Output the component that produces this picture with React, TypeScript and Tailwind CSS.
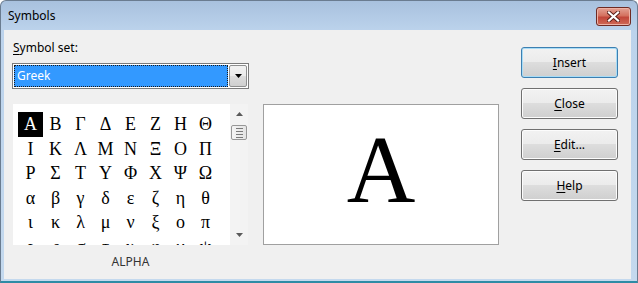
import React from "react"

const ROWS = [
  ["Α", "Β", "Γ", "Δ", "Ε", "Ζ", "Η", "Θ"],
  ["Ι", "Κ", "Λ", "Μ", "Ν", "Ξ", "Ο", "Π"],
  ["Ρ", "Σ", "Τ", "Υ", "Φ", "Χ", "Ψ", "Ω"],
  ["α", "β", "γ", "δ", "ε", "ζ", "η", "θ"],
  ["ι", "κ", "λ", "μ", "ν", "ξ", "ο", "π"],
  ["ρ", "ς", "σ", "τ", "υ", "φ", "χ", "ψ"],
]

const BUTTONS = [
  { key: "I", rest: "nsert", primary: true },
  { key: "C", rest: "lose" },
  { key: "E", rest: "dit..." },
  { key: "H", rest: "elp" },
]

const DialogButton = ({ k, rest, primary }: { k: string; rest: string; primary?: boolean }) => (
  <div
    className={
      "w-[97px] h-[31px] rounded-[3px] border flex items-center justify-center text-[12px] text-black " +
      "bg-[linear-gradient(#f2f2f2,#ebebeb_50%,#dddddd_50%,#cfcfcf)] " +
      (primary ? "border-[#3c7fb1] shadow-[inset_0_0_0_1px_#a8dcf6]" : "border-[#707070] shadow-[inset_0_0_0_1px_#fcfcfc]")
    }
  >
    <span>
      <span className="underline underline-offset-2">{k}</span>
      {rest}
    </span>
  </div>
)

export default function App() {
  return (
    <div className="w-[638px] h-[283px] flex flex-col rounded-t-[6px] border-x border-t border-[#6a7c90] border-b-2 border-b-[#2e8ba5] bg-[linear-gradient(#a8c1de,#bcd3ec_30px,#c4d9ee)] font-['Noto_Sans',sans-serif] overflow-hidden">
      {/* TITLE BAR */}
      <div className="h-[29px] flex items-center justify-between pl-[7px] pr-[6px]">
        <span className="text-[12px] text-black">Symbols</span>
        <div className="mt-[2px] w-[35px] h-[19px] rounded-[3px] border border-[#6e2b24] bg-[linear-gradient(#e3a294,#d4715f_45%,#c2473a_55%,#cf6a56)] shadow-[inset_0_0_0_1px_#eeb2a5] flex items-center justify-center">
          <svg width="13" height="11" viewBox="0 0 13 11">
            <path d="M2 1.5 L11 9.5 M11 1.5 L2 9.5" stroke="#5a2019" strokeWidth="4" strokeLinecap="square" />
            <path d="M2 1.5 L11 9.5 M11 1.5 L2 9.5" stroke="#ffffff" strokeWidth="2.2" strokeLinecap="square" />
          </svg>
        </div>
      </div>

      {/* BODY */}
      <div className="flex-1 ml-[3px] mr-[6px] mb-[2px] bg-[#f0f0f0] flex items-start">
        {/* LEFT */}
        <div className="ml-[8px] w-[237px] pt-[10px] flex flex-col">
          <div className="h-[16px] leading-[16px] text-[12px] text-black pl-[1px]">
            <span className="underline underline-offset-2">S</span>ymbol set:
          </div>

          <div className="mt-[7px] h-[26px] border border-[#7b7b7b] bg-white flex p-[1px]">
            <div className="flex-1 bg-[#3399ff] outline outline-1 outline-dotted outline-[#1a1a1a] -outline-offset-1 flex items-center pl-[3px] text-[12px] text-white">
              Greek
            </div>
            <div className="w-[18px] ml-[1px] border border-[#8e8f8f] rounded-[2px] bg-[linear-gradient(#f2f2f2,#ebebeb_50%,#dddddd_50%,#cfcfcf)] flex items-center justify-center">
              <svg width="7" height="4" viewBox="0 0 7 4">
                <path d="M0 0 L7 0 L3.5 4 Z" fill="#000" />
              </svg>
            </div>
          </div>

          {/* LIST */}
          <div className="mt-[15px] ml-[1px] w-[235px] h-[141px] flex">
            <div className="w-[217px] h-full bg-white overflow-hidden pl-[5px] pt-[8px] font-['Liberation_Serif',serif] text-[18px] text-black">
              {ROWS.map((row, r) => (
                <div key={r} className={"flex overflow-hidden " + (r === ROWS.length - 1 ? "h-[10.5px]" : "h-[24.5px]")}>
                  {row.map((ch, c) => (
                    <div
                      key={c}
                      className={
                        "w-[25px] h-[24.5px] shrink-0 leading-[24.5px] text-center " +
                        (r === 0 && c === 0 ? "bg-black text-white" : "")
                      }
                    >
                      {ch}
                    </div>
                  ))}
                </div>
              ))}
            </div>
            <div className="w-[18px] h-full bg-[#f3f3f3] flex flex-col items-center">
              <svg className="mt-[8px]" width="7" height="4" viewBox="0 0 7 4">
                <path d="M3.5 0 L7 4 L0 4 Z" fill="#5a5a5a" />
              </svg>
              <div className="mt-[9px] w-[16px] h-[15px] rounded-[2px] border border-[#979797] bg-[linear-gradient(90deg,#f4f4f4,#e4e4e4)] flex flex-col items-center justify-center gap-[2px]">
                <div className="w-[7px] h-px bg-[#7a7a7a]" />
                <div className="w-[7px] h-px bg-[#7a7a7a]" />
                <div className="w-[7px] h-px bg-[#7a7a7a]" />
                <div className="w-[7px] h-px bg-[#7a7a7a]" />
              </div>
              <div className="flex-1" />
              <svg className="mb-[8px]" width="7" height="4" viewBox="0 0 7 4">
                <path d="M0 0 L7 0 L3.5 4 Z" fill="#5a5a5a" />
              </svg>
            </div>
          </div>

          <div className="mt-[9px] h-[16px] leading-[16px] text-center text-[12px] text-[#333]">ALPHA</div>
        </div>

        {/* PREVIEW */}
        <div className="ml-[14px] mt-[74px] w-[236px] h-[141px] bg-white border border-[#a0a0a0] flex items-center justify-center pb-[9px]">
          <span className="font-['Liberation_Serif',serif] text-[95px] leading-none text-black">Α</span>
        </div>

        {/* BUTTONS */}
        <div className="ml-[22px] mt-[17px] flex flex-col gap-[10px]">
          {BUTTONS.map((b) => (
            <DialogButton key={b.key} k={b.key} rest={b.rest} primary={b.primary} />
          ))}
        </div>
      </div>
    </div>
  )
}
